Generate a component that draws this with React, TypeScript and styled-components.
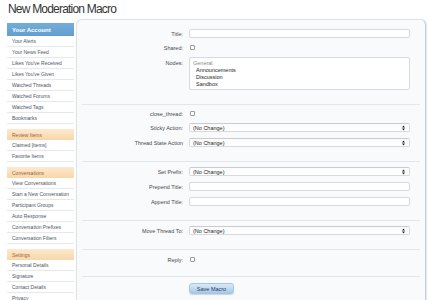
import styled, { createGlobalStyle } from 'styled-components';

const GlobalStyle = createGlobalStyle`
  html, body {
    margin: 0;
    padding: 0;
    background: #ffffff;
  }
  body {
    font-family: 'Liberation Sans', Arial, sans-serif;
    overflow: hidden;
  }
`;

type Group = { title: string; primary?: boolean; items: string[] };

const groups: Group[] = [
  {
    title: 'Your Account',
    primary: true,
    items: [
      'Your Alerts',
      'Your News Feed',
      "Likes You've Received",
      "Likes You've Given",
      'Watched Threads',
      'Watched Forums',
      'Watched Tags',
      'Bookmarks',
    ],
  },
  { title: 'Review Items', items: ['Claimed [items]', 'Favorite Items'] },
  {
    title: 'Conversations',
    items: [
      'View Conversations',
      'Start a New Conversation',
      'Participant Groups',
      'Auto Response',
      'Conversation Prefixes',
      'Conversation Filters',
    ],
  },
  { title: 'Settings', items: ['Personal Details', 'Signature', 'Contact Details', 'Privacy'] },
];

function SelectArrows() {
  return (
    <svg width="3" height="6" viewBox="0 0 3 6">
      <path d="M0 2.4 L1.5 0.4 L3 2.4 Z" fill="#222" />
      <path d="M0 3.6 L1.5 5.6 L3 3.6 Z" fill="#222" />
    </svg>
  );
}

export default function App() {
  return (
    <Page>
      <GlobalStyle />
      <PageTitle>New Moderation Macro</PageTitle>
      <Body>
        <Sidebar>
          {groups.map((g) => (
            <NavGroup key={g.title}>
              <NavHeader $primary={g.primary}>{g.title}</NavHeader>
              {g.items.map((item) => (
                <NavItem key={item}>{item}</NavItem>
              ))}
            </NavGroup>
          ))}
        </Sidebar>

        <Panel>
          <Section $top={9}>
            <Label>Title:</Label>
            <TextInput />
            <Label>Shared:</Label>
            <CheckCell>
              <Checkbox />
            </CheckCell>
            <Label $alignTop>Nodes:</Label>
            <MultiSelect>
              <Option $muted>General</Option>
              <Option $indent>Announcements</Option>
              <Option $indent>Discussion</Option>
              <Option $indent>Sandbox</Option>
            </MultiSelect>
          </Section>

          <Section>
            <Label>close_thread:</Label>
            <CheckCell>
              <Checkbox />
            </CheckCell>
            <Label>Sticky Action:</Label>
            <Select>
              (No Change)
              <SelectArrows />
            </Select>
            <Label>Thread State Action</Label>
            <Select>
              (No Change)
              <SelectArrows />
            </Select>
          </Section>

          <Section>
            <Label>Set Prefix:</Label>
            <Select>
              (No Change)
              <SelectArrows />
            </Select>
            <Label>Prepend Title:</Label>
            <TextInput />
            <Label>Append Title:</Label>
            <TextInput />
          </Section>

          <Section>
            <Label>Move Thread To:</Label>
            <Select>
              (No Change)
              <SelectArrows />
            </Select>
          </Section>

          <Section $top={6} $bottom={13}>
            <Label>Reply:</Label>
            <CheckCell>
              <Checkbox />
            </CheckCell>
          </Section>

          <Actions>
            <span />
            <SaveButton>Save Macro</SaveButton>
          </Actions>
        </Panel>
      </Body>
    </Page>
  );
}

const Page = styled.div`
  padding: 2px 3px 0 7px;
`;

const PageTitle = styled.h1`
  margin: 0 0 2px 1px;
  height: 15px;
  font-family: 'Liberation Sans', Arial, sans-serif;
  font-weight: 400;
  font-size: 12px;
  line-height: 15px;
  letter-spacing: -0.8px;
  color: #333333;
`;

const Body = styled.div`
  display: flex;
  align-items: flex-start;
  gap: 2px;
`;

const Sidebar = styled.nav`
  width: 67px;
  flex-shrink: 0;
  margin-top: 4px;
  display: flex;
  flex-direction: column;
  gap: 5px;
`;

const NavGroup = styled.div`
  display: flex;
  flex-direction: column;
`;

const NavHeader = styled.div<{ $primary?: boolean }>`
  box-sizing: border-box;
  height: ${(p) => (p.$primary ? '13px' : '11px')};
  padding-left: 5px;
  display: flex;
  align-items: center;
  font-size: ${(p) => (p.$primary ? '6px' : '5px')};
  font-weight: ${(p) => (p.$primary ? 700 : 400)};
  color: ${(p) => (p.$primary ? '#ffffff' : '#9a6535')};
  background: ${(p) =>
    p.$primary
      ? 'linear-gradient(#72acd9, #629fd0)'
      : 'linear-gradient(#fde9cf, #f8d6a9)'};
`;

const NavItem = styled.div`
  box-sizing: border-box;
  height: 11px;
  padding-left: 5px;
  display: flex;
  align-items: center;
  font-size: 5px;
  color: #4d5565;
  background: #ffffff;
  border-bottom: 1px solid #e8e8ea;
`;

const Panel = styled.main`
  flex: 1;
  min-height: 300px;
  border: 1px solid #dbe3ea;
  border-right-color: #c3cfd9;
  border-bottom: none;
  border-radius: 6px 6px 0 0;
  background: #f9fafc;
  box-shadow: 1px 0 1px rgba(170, 190, 205, 0.35);
`;

const Section = styled.section<{ $top?: number; $bottom?: number }>`
  margin: 0 5px;
  padding: ${(p) => p.$top ?? 5}px 0 ${(p) => p.$bottom ?? 14}px;
  border-bottom: 1px solid #e3e7ed;
  display: grid;
  grid-template-columns: 101px 221px;
  column-gap: 6px;
  row-gap: 6px;
  align-items: center;
`;

const Label = styled.div<{ $alignTop?: boolean }>`
  text-align: right;
  font-size: 5.5px;
  color: #45494f;
  align-self: ${(p) => (p.$alignTop ? 'start' : 'center')};
  padding-top: ${(p) => (p.$alignTop ? '3px' : '0')};
  white-space: nowrap;
`;

const TextInput = styled.div`
  box-sizing: border-box;
  height: 9px;
  background: #ffffff;
  border: 1px solid #d6dadf;
  border-radius: 2px;
`;

const CheckCell = styled.div`
  height: 7px;
  display: flex;
  align-items: center;
  padding-left: 1px;
`;

const Checkbox = styled.span`
  box-sizing: border-box;
  width: 5px;
  height: 5px;
  border: 1px solid #9a9a9a;
  border-radius: 1px;
  background: #ffffff;
`;

const MultiSelect = styled.div`
  box-sizing: border-box;
  height: 33px;
  overflow: hidden;
  background: #ffffff;
  border: 1px solid #d6dadf;
  border-radius: 2px;
  padding: 2px 0 0 3px;
  display: flex;
  flex-direction: column;
`;

const Option = styled.div<{ $muted?: boolean; $indent?: boolean }>`
  height: 7px;
  line-height: 7px;
  font-size: 5.5px;
  color: ${(p) => (p.$muted ? '#8a8a8a' : '#1e1e1e')};
  padding-left: ${(p) => (p.$indent ? '3px' : '0')};
`;

const Select = styled.div`
  box-sizing: border-box;
  height: 9px;
  padding: 0 4px 0 3px;
  display: flex;
  align-items: center;
  justify-content: space-between;
  font-size: 5.5px;
  color: #1e1e1e;
  background: linear-gradient(#fbfbfb, #ffffff);
  border: 1px solid #d6d9de;
  border-top-color: #c9ccd1;
  border-radius: 2px;
`;

const Actions = styled.div`
  margin: 0 5px;
  padding-top: 6px;
  display: grid;
  grid-template-columns: 101px 45px;
  column-gap: 6px;
`;

const SaveButton = styled.button`
  box-sizing: border-box;
  height: 11px;
  padding: 0;
  font-family: 'Liberation Sans', Arial, sans-serif;
  font-size: 5.5px;
  color: #23405e;
  background: linear-gradient(#d9eaf8, #a7c9e7);
  border: 1px solid #a9c4dd;
  border-radius: 3px;
  box-shadow: 0 1px 1px rgba(120, 150, 180, 0.35);
`;
